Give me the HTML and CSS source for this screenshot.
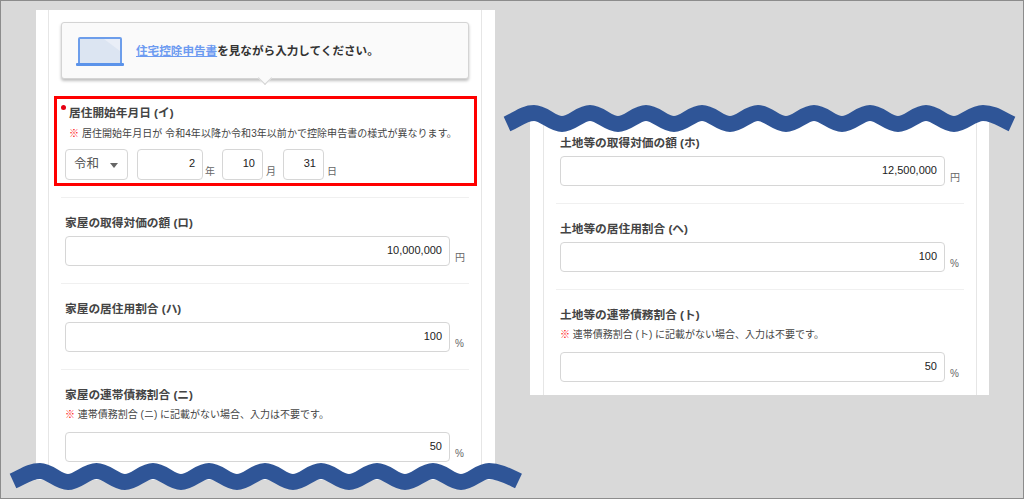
FILE: index.html
```html
<!DOCTYPE html>
<html lang="ja">
<head>
  <meta charset="UTF-8" />
  <title>住宅控除申告書の入力</title>
  <link rel="stylesheet" href="styles.css">
</head>
<body>
  <div class="canvas">

    <div class="sheet sheet-left">
      <div class="sheet-inner">
        <div class="callout">
          <svg class="laptop" width="48" height="30" viewBox="0 0 48 30">
            <rect x="3" y="2" width="42" height="26" rx="1" fill="#dce5f2" stroke="#6d9eeb" stroke-width="2" />
            <path d="M28 3 L44 3 L44 15 Z" fill="#e9eef7" />
            <rect x="0" y="27" width="48" height="3" rx="1" fill="#5b93ea" />
          </svg>
          <p class="callout-text"><a class="callout-link" href="#">住宅控除申告書</a>を見ながら入力してください。</p>
        </div>

        <div class="field field-marked">
          <div class="field-label field-label-required">居住開始年月日 (イ)</div>
          <div class="field-note field-note-indent"><span class="mark">※</span> 居住開始年月日が 令和4年以降か令和3年以前かで控除申告書の様式が異なります。</div>
          <div class="date-row">
            <div class="era-select">令和<span class="era-arrow"></span></div>
            <div class="input input-year">2</div><span class="unit unit-year">年</span>
            <div class="input input-short">10</div><span class="unit unit-date">月</span>
            <div class="input input-short">31</div><span class="unit unit-date">日</span>
          </div>
        </div>

        <div class="field field-line">
          <div class="field-label">家屋の取得対価の額 (ロ)</div>
          <div class="input-row"><div class="input">10,000,000</div><span class="unit">円</span></div>
        </div>
        <div class="field field-line">
          <div class="field-label">家屋の居住用割合 (ハ)</div>
          <div class="input-row"><div class="input">100</div><span class="unit">%</span></div>
        </div>
        <div class="field field-line">
          <div class="field-label">家屋の連帯債務割合 (ニ)</div>
          <div class="field-note"><span class="mark">※</span> 連帯債務割合 (ニ) に記載がない場合、入力は不要です。</div>
          <div class="input-row"><div class="input">50</div><span class="unit">%</span></div>
        </div>
      </div>
    </div>

    <div class="sheet sheet-right">
      <div class="sheet-inner">
        <div class="field">
          <div class="field-label">土地等の取得対価の額 (ホ)</div>
          <div class="input-row"><div class="input">12,500,000</div><span class="unit">円</span></div>
        </div>
        <div class="field field-line">
          <div class="field-label">土地等の居住用割合 (ヘ)</div>
          <div class="input-row"><div class="input">100</div><span class="unit">%</span></div>
        </div>
        <div class="field field-line">
          <div class="field-label">土地等の連帯債務割合 (ト)</div>
          <div class="field-note"><span class="mark">※</span> 連帯債務割合 (ト) に記載がない場合、入力は不要です。</div>
          <div class="input-row"><div class="input">50</div><span class="unit">%</span></div>
        </div>
      </div>
    </div>

    <!-- 切れ目の波線 -->
    <svg class="waves" width="1024" height="499" viewBox="0 0 1024 499">
      <path fill="none" stroke="#2f5597" stroke-width="16" d="M13 481 C24 476 30 471 40 471 S58 482 68 482 S86 471 96.500 471 S115 482 125 482 S143 471 153 471 S171 482 181 482 S199 471 209 471 S227 482 237 482 S255 471 265 471 S283 482 293 482 S311 471 321 471 S339 482 349 482 S367 471 377 471 S395 482 405 482 S423 471 433 471 S451 482 461 482 S479 471 489 471 S508 476 518.500 481" />
      <path fill="none" stroke="#2f5597" stroke-width="16" d="M507 124 C518 119 524 113 534 113 S552 124 562 124 S580 113 590 113 S608 124 618 124 S636 113 646 113 S664 124 674 124 S692 113 702 113 S720 124 730 124 S748 113 758 113 S776 124 786 124 S804 113 814 113 S832 124 842 124 S860 113 870 113 S888 124 898 124 S916 113 926 113 S944 124 954 124 S972 113 983 113 S1001 119 1012 124" />
    </svg>
  </div>
</body>
</html>
```

FILE: styles.css
```css
* {
  box-sizing: border-box;
}
body {
  margin: 0;
  font-family: "Liberation Sans", "Noto Sans CJK JP", sans-serif;
  color: #444;
}
.canvas {
  position: relative;
  width: 1024px;
  height: 499px;
  overflow: hidden;
  background: #d9d9d9;
  border: 1px solid #8c8c8c;
}

/* 切り抜き（キャンバス上の位置が内容そのもの） */
.sheet {
  position: absolute;
  width: 459px;
  background: #fff;
  padding: 0 13px 0 12px;
}
.sheet-left {
  left: 35px;
  top: 9px;
  height: 470px;
}
.sheet-right {
  left: 529px;
  top: 117px;
  height: 277px;
  padding: 0 12px 0 13px;
}
.sheet-inner {
  height: 100%;
  padding: 12px 12px 0;
  border-left: 1px solid #e6e6e6;
  border-right: 1px solid #e6e6e6;
}
.sheet-right .sheet-inner {
  padding-top: 16px;
}

/* 吹き出し */
.callout {
  position: relative;
  display: flex;
  align-items: center;
  gap: 12px;
  height: 57px;
  margin-bottom: 17px;
  padding-left: 14px;
  background: #fafafa;
  border: 1px solid #d4d4d4;
  border-radius: 3px;
  box-shadow: 0 2px 3px rgba(0,0,0,0.25);
}
.callout::after {
  content: "";
  position: absolute;
  left: 198px;
  bottom: -5px;
  width: 9px;
  height: 9px;
  background: #fafafa;
  border-right: 1px solid #d4d4d4;
  border-bottom: 1px solid #d4d4d4;
  transform: rotate(45deg);
}
.callout-text {
  margin: 0 0 2px;
  font-size: 11.6px;
  font-weight: bold;
  color: #333;
}
.callout-link {
  color: #6d9bf1;
}

/* 入力項目 */
.field {
  padding: 0 4px 17px;
}
.field-line {
  padding-top: 16px;
  border-top: 1px solid #f0f0f0;
}
.field-marked {
  position: relative;
  height: 90px;
  margin: 0 -8px 11px -7px;
  padding: 4px 8px 0;
  border: 3px solid #f00;
}
.field-label {
  height: 18px;
  margin-bottom: 4px;
  font-size: 11.7px;
  font-weight: bold;
  line-height: 18px;
}
.field-label-required {
  position: relative;
  margin-left: 4px;
  line-height: 20px;
}
.field-label-required::before {
  content: "";
  position: absolute;
  left: -8px;
  top: 2px;
  width: 5px;
  height: 5px;
  border-radius: 50%;
  background: #e60012;
}
.field-note {
  height: 16px;
  margin: -1px 0 9px;
  font-size: 10px;
  line-height: 16px;
  white-space: nowrap;
}
.field-note-indent {
  margin: 0 0 8px 4px;
  line-height: 18px;
  letter-spacing: 0.05px;
}
.mark {
  color: #f11;
  font-weight: bold;
}
.input-row {
  display: flex;
}
.input {
  flex: 1;
  height: 30px;
  padding-right: 7px;
  background: #fff;
  border: 1px solid #d6d6d6;
  border-radius: 4px;
  font-size: 11px;
  line-height: 27px;
  text-align: right;
  color: #222;
}
.unit {
  align-self: flex-end;
  width: 15px;
  padding: 0 0 2px 5px;
  font-size: 10px;
  line-height: 13px;
  color: #666;
}
.date-row {
  display: flex;
}
.era-select {
  position: relative;
  width: 63px;
  height: 31px;
  margin-right: 9px;
  padding-left: 8px;
  border: 1px solid #d6d6d6;
  border-radius: 4px;
  font-size: 12.5px;
  line-height: 28px;
  color: #555;
}
.era-arrow {
  position: absolute;
  right: 9px;
  top: 13px;
  border-top: 5px solid #666;
  border-left: 4.500px solid transparent;
  border-right: 4.500px solid transparent;
}
.date-row .input {
  flex: none;
  height: 31px;
}
.input-year {
  width: 66px;
}
.input-short {
  width: 41px;
}
.unit-year {
  width: 19px;
  padding: 0 6px 2px 2px;
}
.unit-date {
  width: 20px;
  padding: 0 7px 2px 3px;
}

.waves {
  position: absolute;
  left: -1px;
  top: -1px;
}
```
